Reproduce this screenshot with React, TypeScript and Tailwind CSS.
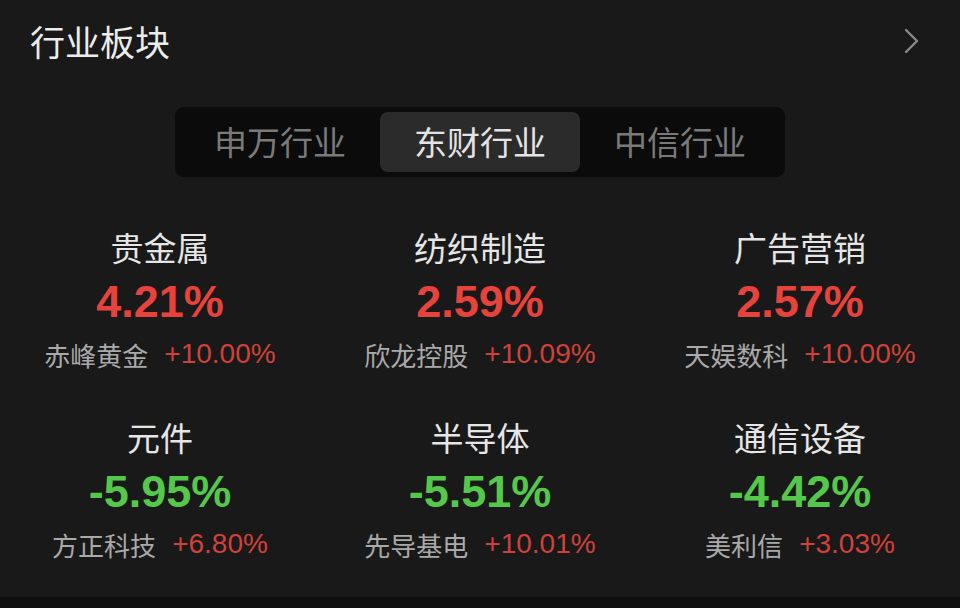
type Sector = {
  name: string;
  change: string;
  up: boolean;
  leader: string;
  leaderChange: string;
};

const sectors: Sector[] = [
  { name: "贵金属", change: "4.21%", up: true, leader: "赤峰黄金", leaderChange: "+10.00%" },
  { name: "纺织制造", change: "2.59%", up: true, leader: "欣龙控股", leaderChange: "+10.09%" },
  { name: "广告营销", change: "2.57%", up: true, leader: "天娱数科", leaderChange: "+10.00%" },
  { name: "元件", change: "-5.95%", up: false, leader: "方正科技", leaderChange: "+6.80%" },
  { name: "半导体", change: "-5.51%", up: false, leader: "先导基电", leaderChange: "+10.01%" },
  { name: "通信设备", change: "-4.42%", up: false, leader: "美利信", leaderChange: "+3.03%" },
];

const tabs = ["申万行业", "东财行业", "中信行业"];

const cjk = "font-['Noto_Sans_CJK_SC',sans-serif]";
const num = "font-['Liberation_Sans','Noto_Sans_CJK_SC',sans-serif]";

function SectorCell({ s }: { s: Sector }) {
  return (
    <div className="flex flex-col items-center">
      <div className={`${cjk} h-[40px] leading-[40px] text-[33px] text-[#e6e6e6]`}>{s.name}</div>
      <div
        className={`${num} mt-[10px] h-[50px] leading-[50px] text-[45px] font-bold ${
          s.up ? "text-[#e5433b]" : "text-[#55c84c]"
        }`}
      >
        {s.change}
      </div>
      <div className="mt-[11px] flex h-[32px] items-center gap-[16px]">
        <span className={`${cjk} text-[26px] text-[#a9a9a9]`}>{s.leader}</span>
        <span className={`${num} text-[28px] text-[#d0413a]`}>{s.leaderChange}</span>
      </div>
    </div>
  );
}

export default function App() {
  return (
    <div className="flex h-[608px] w-[960px] flex-col bg-[#0f0f0f]">
      <div className="h-[597px] bg-[#191919]">
        <div className="flex h-[82px] items-center justify-between pl-[30px] pr-[41px]">
          <h1 className={`${cjk} text-[35px] text-[#ececec]`}>行业板块</h1>
          {/* thin "more" chevron */}
          <svg width="15" height="26" viewBox="0 0 15 26" fill="none">
            <path
              d="M2 2 L13 13 L2 24"
              stroke="#8a8a8a"
              strokeWidth="2.4"
              strokeLinecap="round"
              strokeLinejoin="round"
            />
          </svg>
        </div>

        <div className="mt-[25px] flex justify-center">
          <div className="flex h-[70px] rounded-[9px] bg-[#0b0b0b] p-[5px]">
            {tabs.map((t, i) => (
              <div
                key={t}
                className={`${cjk} flex w-[200px] items-center justify-center rounded-[8px] text-[33px] ${
                  i === 1 ? "bg-[#2b2b2b] text-[#e4e4e4]" : "text-[#7a7a7a]"
                }`}
              >
                {t}
              </div>
            ))}
          </div>
        </div>

        <div className="mt-[50px] grid grid-cols-3 gap-y-[47px]">
          {sectors.map((s) => (
            <SectorCell key={s.name} s={s} />
          ))}
        </div>
      </div>
    </div>
  );
}
